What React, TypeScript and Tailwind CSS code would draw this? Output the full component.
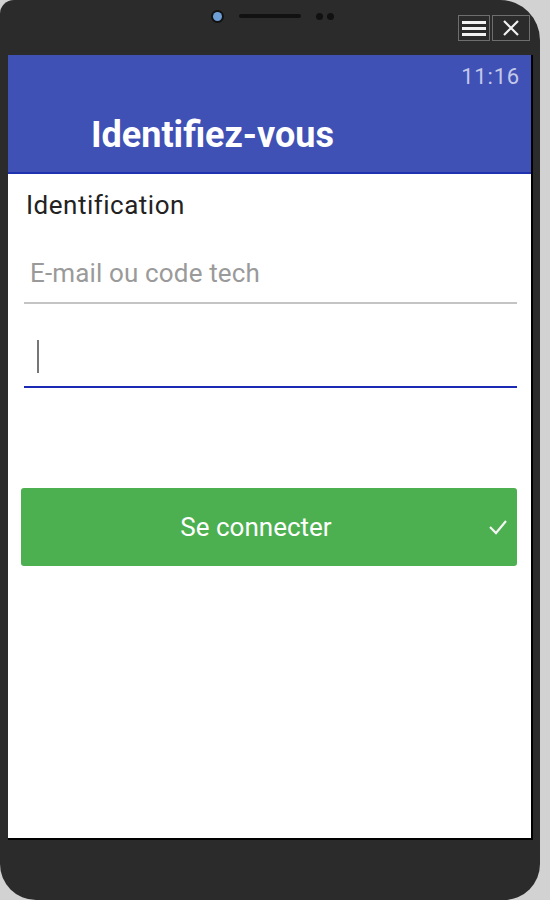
import React from 'react';

function MenuIcon() {
  return (
    <svg width="26" height="20" viewBox="0 0 26 20">
      <rect x="1" y="3" width="24" height="3" fill="#f2f2f2" />
      <rect x="1" y="9" width="24" height="3" fill="#f2f2f2" />
      <rect x="1" y="15" width="24" height="3" fill="#f2f2f2" />
    </svg>
  );
}

function CloseIcon() {
  return (
    <svg width="20" height="20" viewBox="0 0 20 20">
      <path d="M3 3 L17 17 M17 3 L3 17" stroke="#f2f2f2" strokeWidth="2.2" fill="none" />
    </svg>
  );
}

export default function App() {
  return (
    <div className="min-h-screen bg-[#d2d2d2]" style={{ fontFamily: 'Roboto, "Liberation Sans", sans-serif' }}>
      <div className="w-[540px] h-[900px] bg-[#2b2b2b] rounded-tl-[14px] rounded-tr-[40px] rounded-b-[36px] flex flex-col overflow-hidden">
        {/* top bezel */}
        <div className="h-[55px] grid grid-cols-[1fr_auto_1fr]">
          <div />
          <div className="flex items-center h-[32px] pl-[6px]">
            <div className="w-[9px] h-[9px] rounded-full bg-[#6d9fd6] ring-2 ring-[#111]" />
            <div className="w-[62px] h-[4px] rounded-full bg-[#111] ml-[17px]" />
            <div className="flex gap-[4px] ml-[15px]">
              <div className="w-[7px] h-[7px] rounded-full bg-[#111]" />
              <div className="w-[7px] h-[7px] rounded-full bg-[#111]" />
            </div>
          </div>
          <div className="flex justify-end items-start pt-[15px] pr-[10px] gap-[2px]">
            <div className="w-[32px] h-[26px] border border-[#6e6e6e] flex items-center justify-center">
              <MenuIcon />
            </div>
            <div className="w-[38px] h-[26px] border border-[#6e6e6e] flex items-center justify-center">
              <CloseIcon />
            </div>
          </div>
        </div>

        {/* screen */}
        <div className="ml-[8px] w-[525px] h-[785px] bg-white border-r-[2px] border-b-[2px] border-black flex flex-col">
          <div className="h-[119px] bg-[#3f51b5] border-b-[2px] border-[#1f33b0] flex flex-col">
            <div className="flex justify-end pt-[11px] pr-[11px] text-[22px] leading-[22px] text-[#c3c8e8] tracking-[0.8px]">11:16</div>
            <div className="pl-[83px] mt-[29px] text-[36px] font-bold text-white leading-none">Identifiez-vous</div>
          </div>

          <div className="flex flex-col pl-[16px] pr-[14px] pt-[16px]">
            <div className="pl-[2px] text-[26px] text-[#222] leading-[30px] tracking-[0.5px]">Identification</div>
            <div className="mt-[38px] border-b-[2px] border-[#c4c4c4] h-[46px] flex items-start">
              <span className="pl-[6px] text-[26px] text-[#9a9a9a] leading-[30px] tracking-[0.15px]">E-mail ou code tech</span>
            </div>
            <div className="mt-[36px] border-b-[2px] border-[#1b2ab5] h-[48px] flex items-start">
              <div className="ml-[13px] w-[2px] h-[33px] bg-[#777]" />
            </div>
          </div>

          <div className="mt-[100px] ml-[13px] mr-[14px] h-[78px] bg-[#4caf50] rounded-[3px] flex items-center relative">
            <span className="flex-1 text-center pr-[26px] text-[26px] text-white">Se connecter</span>
            <svg className="absolute right-[9px] top-[30px]" width="20" height="18" viewBox="0 0 20 18">
              <path d="M2 9 L8 15 L18 3" stroke="#f4f4f4" strokeWidth="2.2" fill="none" />
            </svg>
          </div>
        </div>
      </div>
    </div>
  );
}
